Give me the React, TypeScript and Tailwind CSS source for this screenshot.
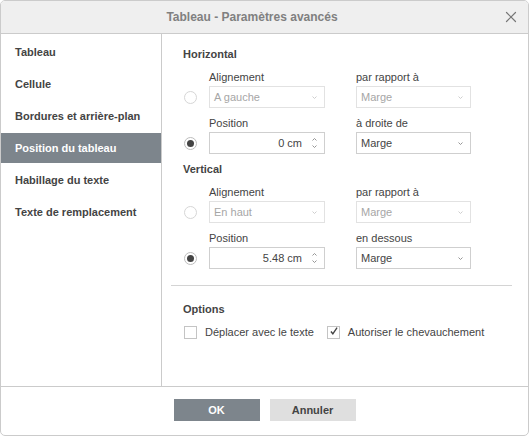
import { X } from "lucide-react";

const TABS = [
  "Tableau",
  "Cellule",
  "Bordures et arrière-plan",
  "Position du tableau",
  "Habillage du texte",
  "Texte de remplacement",
];

function Chevron({ up = false, light = false }: { up?: boolean; light?: boolean }) {
  return (
    <svg width="5" height="3" viewBox="0 0 5 3" className={up ? "rotate-180" : ""}>
      <path
        d="M0.5 0.5 L2.5 2.5 L4.5 0.5"
        fill="none"
        stroke={light ? "#c8c8c8" : "#8a8a8a"}
        strokeWidth="0.9"
      />
    </svg>
  );
}

function Combo({ value, disabled = false }: { value: string; disabled?: boolean }) {
  return (
    <div
      className={`flex h-[22px] items-center justify-between border bg-white pr-[7px] pl-[4px] text-[11px] ${
        disabled ? "border-[#e2e2e2] text-[#a6a6a6]" : "border-[#cfcfcf] text-[#444]"
      }`}
    >
      <span>{value}</span>
      <Chevron light={disabled} />
    </div>
  );
}

function Spinner({ value }: { value: string }) {
  return (
    <div className="flex h-[22px] items-center justify-end border border-[#cfcfcf] bg-white pr-[7px] text-[11px] text-[#444]">
      <span className="mr-[10px]">{value}</span>
      <div className="flex flex-col gap-[4px]">
        <Chevron up />
        <Chevron />
      </div>
    </div>
  );
}

function Radio({ checked = false }: { checked?: boolean }) {
  return (
    <div
      className={`flex h-[13px] w-[13px] items-center justify-center rounded-full border bg-white ${
        checked ? "border-[#bdbdbd]" : "border-[#d6d6d6]"
      }`}
    >
      {checked && <div className="h-[7px] w-[7px] rounded-full bg-[#444]" />}
    </div>
  );
}

function Field({ label, children }: { label: string; children: React.ReactNode }) {
  return (
    <div className="flex flex-col">
      <div className="mb-[2px] text-[11px] leading-[13px] text-[#444]">{label}</div>
      {children}
    </div>
  );
}

function Row({
  checked,
  children,
}: {
  checked?: boolean;
  children: React.ReactNode;
}) {
  return (
    <div className="flex items-end">
      <div className="mb-[4px] w-[26px] pl-[1px]">
        <Radio checked={checked} />
      </div>
      {children}
    </div>
  );
}

function Section({
  title,
  align,
  relLabel,
  posValue,
  posRelLabel,
}: {
  title: string;
  align: string;
  relLabel: string;
  posValue: string;
  posRelLabel: string;
}) {
  return (
    <div className="flex flex-col">
      <div className="text-[11px] leading-[13px] font-bold text-[#444]">{title}</div>
      <div className="mt-[10px]">
        <Row>
          <div className="w-[116px]">
            <Field label="Alignement">
              <Combo value={align} disabled />
            </Field>
          </div>
          <div className="ml-[31px] w-[115px]">
            <Field label={relLabel}>
              <Combo value="Marge" disabled />
            </Field>
          </div>
        </Row>
      </div>
      <div className="mt-[9px]">
        <Row checked>
          <div className="w-[116px]">
            <Field label="Position">
              <Spinner value={posValue} />
            </Field>
          </div>
          <div className="ml-[31px] w-[115px]">
            <Field label={posRelLabel}>
              <Combo value="Marge" />
            </Field>
          </div>
        </Row>
      </div>
    </div>
  );
}

function Checkbox({ checked = false }: { checked?: boolean }) {
  return (
    <div className="flex h-[13px] w-[13px] items-center justify-center border border-[#c4c4c4] bg-white">
      {checked && (
        <svg width="13" height="13" viewBox="0 0 13 13" className="-mt-[2px] ml-[1px]">
          <path d="M2.5 6.5 L5 9.5 L10.5 1.5" fill="none" stroke="#444" strokeWidth="1.8" />
        </svg>
      )}
    </div>
  );
}

export default function App() {
  return (
    <div className="h-[436px] w-[529px] bg-white font-['Liberation_Sans',Arial,sans-serif]">
      <div className="flex h-full w-full flex-col overflow-hidden rounded-[5px] border border-[#cbcbcb]">
        <div className="relative flex h-[33px] flex-none items-center justify-center border-b border-[#cbcbcb] bg-[#efefef] pr-[25px]">
          <span className="text-[12px] font-bold text-[#808080]">Tableau - Paramètres avancés</span>
          <X className="absolute top-[7px] right-[8px] h-[18px] w-[18px] text-[#777]" strokeWidth={1.6} />
        </div>

        <div className="flex min-h-0 flex-1">
          <aside className="flex w-[161px] flex-none flex-col gap-[2px] border-r border-[#cbcbcb] pt-[3px]">
            {TABS.map((tab) => (
              <div
                key={tab}
                className={`flex h-[30px] items-center pl-[14px] text-[11px] font-bold ${
                  tab === "Position du tableau" ? "bg-[#7d858c] text-white" : "text-[#444]"
                }`}
              >
                {tab}
              </div>
            ))}
          </aside>

          <main className="flex flex-1 flex-col pt-[14px] pl-[21px]">
            <Section
              title="Horizontal"
              align="A gauche"
              relLabel="par rapport à"
              posValue="0 cm"
              posRelLabel="à droite de"
            />
            <div className="mt-[9px]">
              <Section
                title="Vertical"
                align="En haut"
                relLabel="par rapport à"
                posValue="5.48 cm"
                posRelLabel="en dessous"
              />
            </div>
            <div className="mt-[16px] mr-[16px] -ml-[12px] h-px bg-[#d4d4d4]" />
            <div className="mt-[17px] text-[11px] leading-[13px] font-bold text-[#444]">Options</div>
            <div className="mt-[8px] flex items-center text-[11px] text-[#444]">
              <div className="ml-[1px]">
                <Checkbox />
              </div>
              <span className="ml-[8px]">Déplacer avec le texte</span>
              <div className="ml-[13px]">
                <Checkbox checked />
              </div>
              <span className="ml-[8px]">Autoriser le chevauchement</span>
            </div>
          </main>
        </div>

        <div className="flex h-[49px] flex-none items-center justify-center gap-[10px] border-t border-[#cbcbcb] pb-[2px]">
          <button className="h-[22px] w-[86px] bg-[#7d858c] text-[11px] font-bold text-white">OK</button>
          <button className="h-[22px] w-[86px] bg-[#dfdfdf] text-[11px] font-bold text-[#444]">Annuler</button>
        </div>
      </div>
    </div>
  );
}
